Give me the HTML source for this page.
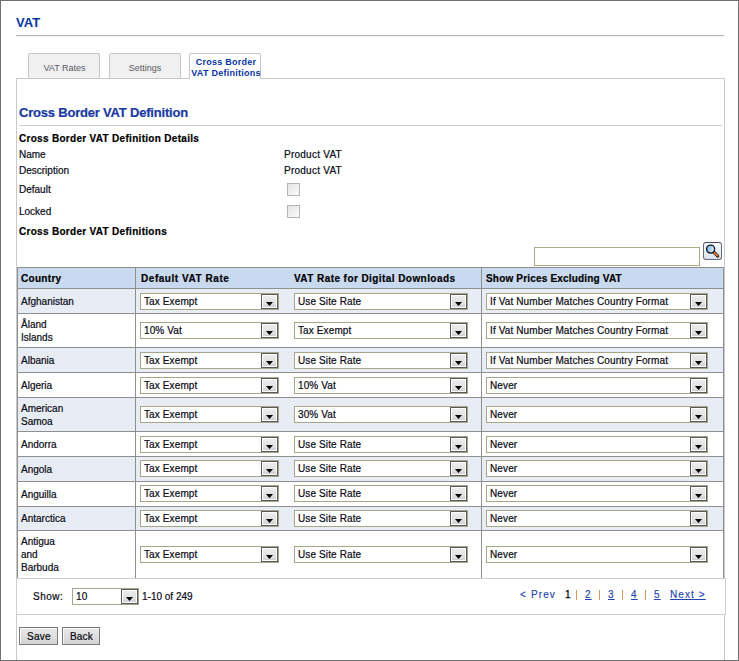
<!DOCTYPE html>
<html><head><meta charset="utf-8"><style>
*{box-sizing:border-box}
html,body{margin:0;padding:0}
body{width:739px;height:661px;overflow:hidden;position:relative;background:#fff;font-family:"Liberation Sans",sans-serif;font-size:10px;color:#000}
.ct,.st,.nt,.btn,.th,.bd{-webkit-text-stroke:0.2px currentColor}
.a{position:absolute;white-space:nowrap}
#frame{position:absolute;left:0;top:0;width:739px;height:661px;border:1px solid #6f6f6f}
.tab{position:absolute;top:53px;height:26px;width:72px;border:1px solid #c6c6c6;border-bottom:none;background:#f0f0f0;border-radius:2px 2px 0 0;color:#5a5a66;font-size:9px;text-align:center}
.row{position:absolute;left:18px;width:705px}
.hl{position:absolute;left:17px;width:707px;height:1px;background:#8f8f8f}
.ct{position:absolute;left:21px;line-height:13px;font-size:10px;color:#0a0a14}
.sel{position:absolute;height:17px;border:1px solid #a8a68a;background:#fff}
.st{position:absolute;left:3px;top:2px;line-height:12px;color:#0a0a14;letter-spacing:0.12px}
.dd{position:absolute;right:0;top:0;width:17px;height:15px;border:1px solid #595959;box-shadow:inset 0 0 0 1px #fff;background:linear-gradient(#eeeeee,#dedede 70%,#c9cad3)}
.dd i{position:absolute;left:4px;top:7px;width:7px;height:4px;background:#000;clip-path:polygon(0 0,100% 0,50% 100%)}
.th{position:absolute;top:269px;line-height:20px;font-weight:bold;font-size:10px;letter-spacing:0.3px;color:#000}
.btn{position:absolute;top:627px;height:18px;border:1px solid #7a7a7a;background:linear-gradient(#e9e9e9,#d3d3d3);box-shadow:inset 1px 1px 0 #f6f6f6;font-size:10px;line-height:17px;text-align:center;color:#0a0a14;letter-spacing:0.25px;padding-left:1px}
.pg{position:absolute;top:589px;line-height:12px;font-size:10px;letter-spacing:1.1px;color:#2444b0;white-space:nowrap;-webkit-text-stroke:0.15px currentColor}
.pg.b1{color:#000;letter-spacing:0;-webkit-text-stroke:0.25px #000}
.pg.bar{top:590px;width:1px;height:10px;background:#d89858}
.pg u{text-decoration:underline}
</style></head><body>
<div class="a" style="left:16px;top:15px;font-size:13px;font-weight:bold;color:#0036a0;line-height:16px">VAT</div>
<div class="a" style="left:16px;top:35px;width:708px;height:1px;background:#b9b9b9"></div>
<div class="a" style="left:16px;top:36px;width:708px;height:1px;background:#f3f3f3"></div>

<div class="tab" style="left:28px"><span style="position:absolute;left:1px;right:0;top:8px;line-height:12px">VAT Rates</span></div>
<div class="tab" style="left:109px"><span style="position:absolute;left:0;right:0;top:8px;line-height:12px">Settings</span></div>

<!-- content box -->
<div class="a" style="left:16px;top:78px;width:709px;height:600px;border:1px solid #c9c9c9;border-bottom:none"></div>
<div class="tab" style="left:189px;width:72px;background:#fff;height:26px"></div>
<div class="a" style="left:190px;top:57px;font-size:9px;font-weight:bold;color:#0a34a8;line-height:11px;letter-spacing:0.25px;text-align:center;width:72px">Cross Border<br>VAT Definitions</div>

<div class="a bd" style="left:19px;top:105px;font-size:13px;font-weight:bold;color:#1a3aa2;line-height:16px;letter-spacing:-0.2px">Cross Border VAT Definition</div>
<div class="a" style="left:19px;top:125px;width:703px;height:1px;background:#cfcfcf"></div>
<div class="a bd" style="left:19px;top:133px;font-weight:bold;line-height:12px;letter-spacing:0.3px">Cross Border VAT Definition Details</div>
<div class="a nt" style="left:19px;top:149px;line-height:12px;color:#0a0a14">Name</div>
<div class="a nt" style="left:19px;top:165px;line-height:12px;color:#0a0a14">Description</div>
<div class="a nt" style="left:19px;top:184px;line-height:12px;color:#0a0a14">Default</div>
<div class="a nt" style="left:19px;top:206px;line-height:12px;color:#0a0a14">Locked</div>
<div class="a nt" style="left:284px;top:149px;line-height:12px;color:#0a0a14;letter-spacing:0.25px">Product VAT</div>
<div class="a nt" style="left:284px;top:165px;line-height:12px;color:#0a0a14;letter-spacing:0.25px">Product VAT</div>
<div class="a" style="left:287px;top:183px;width:13px;height:13px;border:1px solid #b5b5b5;background:linear-gradient(135deg,#e4e4e4,#fafafa)"></div>
<div class="a" style="left:287px;top:205px;width:13px;height:13px;border:1px solid #b5b5b5;background:linear-gradient(135deg,#e4e4e4,#fafafa)"></div>
<div class="a bd" style="left:19px;top:226px;font-weight:bold;line-height:12px;letter-spacing:0.3px">Cross Border VAT Definitions</div>

<!-- search -->
<div class="a" style="left:534px;top:247px;width:166px;height:19px;border:1px solid #aeab88;background:#fff"></div>
<div class="a" style="left:703px;top:242px;width:19px;height:18px;border:1px solid #646a78;border-top-color:#454b58;border-radius:3px;background:linear-gradient(#f8fafd,#e6ecf2 60%,#d8e2ea)">
<svg width="17" height="16" style="position:absolute;left:0;top:0" viewBox="0 0 17 16">
<defs><linearGradient id="lg" x1="0" y1="0" x2="1" y2="0.3"><stop offset="0" stop-color="#7fb6ea"/><stop offset="0.6" stop-color="#a9d2f6"/><stop offset="1" stop-color="#f4f9ff"/></linearGradient></defs>
<line x1="9.6" y1="8.8" x2="13.6" y2="13" stroke="#2a1a10" stroke-width="3.2" stroke-linecap="round"/>
<line x1="10" y1="9.3" x2="13.3" y2="12.7" stroke="#e0843a" stroke-width="1.7" stroke-linecap="round"/>
<circle cx="6.6" cy="6.1" r="4" fill="url(#lg)" stroke="#10141e" stroke-width="1.35"/>
</svg></div>

<!-- table -->
<div class="a" style="left:17px;top:267px;width:707px;height:311px;border-left:1px solid #8f8f8f;border-right:1px solid #8f8f8f"></div>
<div class="row" style="top:268px;height:20px;background:#c9d9ef"></div>
<div class="hl" style="top:267px"></div>
<div class="hl" style="top:288px"></div>
<div class="row" style="top:289px;height:24px;background:#e8edf5"></div>
<div class="hl" style="top:313px"></div>
<div class="ct" style="top:294.5px">Afghanistan</div>
<div class="sel" style="left:140px;top:293px;width:139px"><span class="st">Tax Exempt</span><div class="dd"><i></i></div></div>
<div class="sel" style="left:294px;top:293px;width:174px"><span class="st">Use Site Rate</span><div class="dd"><i></i></div></div>
<div class="sel" style="left:486px;top:293px;width:222px"><span class="st">If Vat Number Matches Country Format</span><div class="dd"><i></i></div></div>
<div class="row" style="top:314px;height:33px;background:#ffffff"></div>
<div class="hl" style="top:347px"></div>
<div class="ct" style="top:317.5px">Åland<br>Islands</div>
<div class="sel" style="left:140px;top:322px;width:139px"><span class="st">10% Vat</span><div class="dd"><i></i></div></div>
<div class="sel" style="left:294px;top:322px;width:174px"><span class="st">Tax Exempt</span><div class="dd"><i></i></div></div>
<div class="sel" style="left:486px;top:322px;width:222px"><span class="st">If Vat Number Matches Country Format</span><div class="dd"><i></i></div></div>
<div class="row" style="top:348px;height:24px;background:#e8edf5"></div>
<div class="hl" style="top:372px"></div>
<div class="ct" style="top:353.5px">Albania</div>
<div class="sel" style="left:140px;top:352px;width:139px"><span class="st">Tax Exempt</span><div class="dd"><i></i></div></div>
<div class="sel" style="left:294px;top:352px;width:174px"><span class="st">Use Site Rate</span><div class="dd"><i></i></div></div>
<div class="sel" style="left:486px;top:352px;width:222px"><span class="st">If Vat Number Matches Country Format</span><div class="dd"><i></i></div></div>
<div class="row" style="top:373px;height:24px;background:#ffffff"></div>
<div class="hl" style="top:397px"></div>
<div class="ct" style="top:378.5px">Algeria</div>
<div class="sel" style="left:140px;top:377px;width:139px"><span class="st">Tax Exempt</span><div class="dd"><i></i></div></div>
<div class="sel" style="left:294px;top:377px;width:174px"><span class="st">10% Vat</span><div class="dd"><i></i></div></div>
<div class="sel" style="left:486px;top:377px;width:222px"><span class="st">Never</span><div class="dd"><i></i></div></div>
<div class="row" style="top:398px;height:33px;background:#e8edf5"></div>
<div class="hl" style="top:431px"></div>
<div class="ct" style="top:401.5px">American<br>Samoa</div>
<div class="sel" style="left:140px;top:406px;width:139px"><span class="st">Tax Exempt</span><div class="dd"><i></i></div></div>
<div class="sel" style="left:294px;top:406px;width:174px"><span class="st">30% Vat</span><div class="dd"><i></i></div></div>
<div class="sel" style="left:486px;top:406px;width:222px"><span class="st">Never</span><div class="dd"><i></i></div></div>
<div class="row" style="top:432px;height:24px;background:#ffffff"></div>
<div class="hl" style="top:456px"></div>
<div class="ct" style="top:437.5px">Andorra</div>
<div class="sel" style="left:140px;top:436px;width:139px"><span class="st">Tax Exempt</span><div class="dd"><i></i></div></div>
<div class="sel" style="left:294px;top:436px;width:174px"><span class="st">Use Site Rate</span><div class="dd"><i></i></div></div>
<div class="sel" style="left:486px;top:436px;width:222px"><span class="st">Never</span><div class="dd"><i></i></div></div>
<div class="row" style="top:457px;height:24px;background:#e8edf5"></div>
<div class="hl" style="top:481px"></div>
<div class="ct" style="top:462.5px">Angola</div>
<div class="sel" style="left:140px;top:460px;width:139px"><span class="st">Tax Exempt</span><div class="dd"><i></i></div></div>
<div class="sel" style="left:294px;top:460px;width:174px"><span class="st">Use Site Rate</span><div class="dd"><i></i></div></div>
<div class="sel" style="left:486px;top:460px;width:222px"><span class="st">Never</span><div class="dd"><i></i></div></div>
<div class="row" style="top:482px;height:24px;background:#ffffff"></div>
<div class="hl" style="top:506px"></div>
<div class="ct" style="top:487.5px">Anguilla</div>
<div class="sel" style="left:140px;top:485px;width:139px"><span class="st">Tax Exempt</span><div class="dd"><i></i></div></div>
<div class="sel" style="left:294px;top:485px;width:174px"><span class="st">Use Site Rate</span><div class="dd"><i></i></div></div>
<div class="sel" style="left:486px;top:485px;width:222px"><span class="st">Never</span><div class="dd"><i></i></div></div>
<div class="row" style="top:507px;height:23px;background:#e8edf5"></div>
<div class="hl" style="top:530px"></div>
<div class="ct" style="top:512.0px">Antarctica</div>
<div class="sel" style="left:140px;top:510px;width:139px"><span class="st">Tax Exempt</span><div class="dd"><i></i></div></div>
<div class="sel" style="left:294px;top:510px;width:174px"><span class="st">Use Site Rate</span><div class="dd"><i></i></div></div>
<div class="sel" style="left:486px;top:510px;width:222px"><span class="st">Never</span><div class="dd"><i></i></div></div>
<div class="row" style="top:531px;height:47px;background:#ffffff"></div>
<div class="ct" style="top:535.0px">Antigua<br>and<br>Barbuda</div>
<div class="sel" style="left:140px;top:546px;width:139px"><span class="st">Tax Exempt</span><div class="dd"><i></i></div></div>
<div class="sel" style="left:294px;top:546px;width:174px"><span class="st">Use Site Rate</span><div class="dd"><i></i></div></div>
<div class="sel" style="left:486px;top:546px;width:222px"><span class="st">Never</span><div class="dd"><i></i></div></div>
<div class="a" style="left:135px;top:267px;width:1px;height:311px;background:#8f8f8f"></div>
<div class="a" style="left:481px;top:267px;width:1px;height:311px;background:#8f8f8f"></div>
<div class="th" style="left:21px">Country</div>
<div class="th" style="left:141px;letter-spacing:0.55px">Default VAT Rate</div>
<div class="th" style="left:294px;letter-spacing:0.43px">VAT Rate for Digital Downloads</div>
<div class="th" style="left:486px;letter-spacing:0.18px">Show Prices Excluding VAT</div>

<!-- pager -->
<div class="a" style="left:16px;top:578px;width:710px;height:37px;border:1px solid #cfcfcf;background:#fff"></div>
<div class="a nt" style="left:33px;top:591px;line-height:12px;color:#0a0a14;letter-spacing:0.5px">Show:</div>
<div class="sel" style="left:72px;top:588px;width:67px"><span class="st">10</span><div class="dd"><i></i></div></div>
<div class="a nt" style="left:142px;top:591px;line-height:12px;color:#0a0a14">1-10 of 249</div>
<div class="pg" style="left:520px">&lt;</div>
<div class="pg" style="left:531px">Prev</div>
<div class="pg b1" style="left:565px">1</div>
<div class="pg bar" style="left:576px"></div>
<div class="pg" style="left:585px"><u>2</u></div>
<div class="pg bar" style="left:599px"></div>
<div class="pg" style="left:608px"><u>3</u></div>
<div class="pg bar" style="left:622px"></div>
<div class="pg" style="left:631px"><u>4</u></div>
<div class="pg bar" style="left:645px"></div>
<div class="pg" style="left:654px"><u>5</u></div>
<div class="pg" style="left:670px"><u>Next&nbsp;&gt;</u></div>

<div class="btn" style="left:19px;width:39px">Save</div>
<div class="btn" style="left:62px;width:38px">Back</div>
<div id="frame"></div>
</body></html>
